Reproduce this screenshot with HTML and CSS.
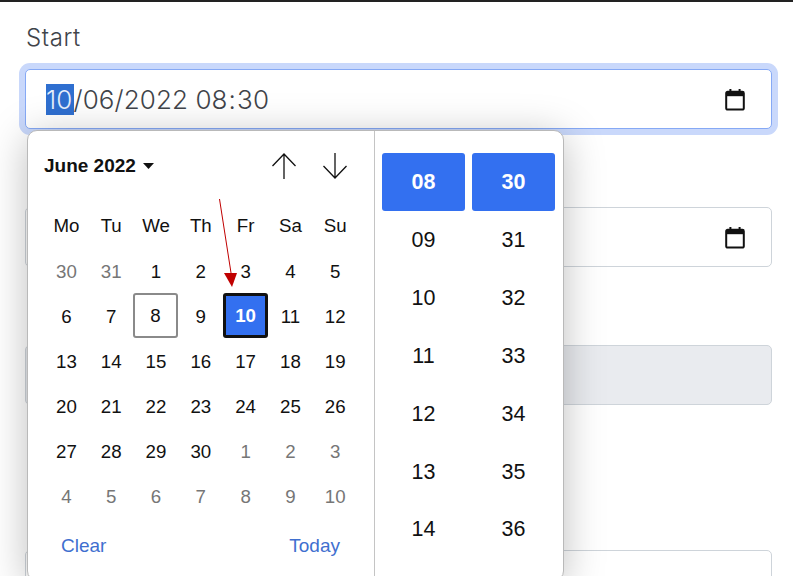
FILE: index.html
```html
<!DOCTYPE html>
<html lang="en">
<head>
<meta charset="utf-8">
<title>Date picker</title>
<link rel="stylesheet" href="styles.css">
</head>
<body>
<div class="page">
  <form class="form">
    <label class="label">Start</label>
    <div class="input input-focus">
      <span class="value"><span class="sel">10</span>/06/2022 08<span class="colon">:</span>30</span>
      <svg class="cal" viewBox="0 0 24 24" width="24" height="24"><path d="M3.2 6.2a1.4 1.4 0 0 1 1.4-1.4h14.8a1.4 1.4 0 0 1 1.4 1.4v15a1.4 1.4 0 0 1-1.4 1.4H4.6a1.4 1.4 0 0 1-1.4-1.4z" fill="none" stroke="#111" stroke-width="2"/><path d="M3.2 5h17.6v4.2H3.2z" fill="#111"/><path d="M7.4 2v3M16.6 2v3" stroke="#111" stroke-width="2"/></svg>
    </div>
    <div class="input second">
      <svg class="cal" viewBox="0 0 24 24" width="24" height="24"><path d="M3.2 6.2a1.4 1.4 0 0 1 1.4-1.4h14.8a1.4 1.4 0 0 1 1.4 1.4v15a1.4 1.4 0 0 1-1.4 1.4H4.6a1.4 1.4 0 0 1-1.4-1.4z" fill="none" stroke="#111" stroke-width="2"/><path d="M3.2 5h17.6v4.2H3.2z" fill="#111"/><path d="M7.4 2v3M16.6 2v3" stroke="#111" stroke-width="2"/></svg>
    </div>
    <div class="input third"></div>
    <div class="input fourth"></div>
  </form>

  <div class="popup">
    <div class="calendar">
      <div class="cal-head">
        <span class="month">June 2022</span>
        <svg class="caret" viewBox="0 0 11 6" width="11" height="6"><path d="M0 0h11L5.500 6z" fill="#111"/></svg>
        <span class="arrows">
          <svg viewBox="0 0 26 28" width="26" height="28"><path d="M13 2v25M1.500 14 13 2l11.500 12" fill="none" stroke="#111" stroke-width="1.300"/></svg>
          <svg viewBox="0 0 26 28" width="26" height="28"><path d="M13 1v25M1.500 14 13 26l11.500-12" fill="none" stroke="#111" stroke-width="1.300"/></svg>
        </span>
      </div>
      <div class="grid">
        <span class="dow">Mo</span><span class="dow">Tu</span><span class="dow">We</span><span class="dow">Th</span><span class="dow">Fr</span><span class="dow">Sa</span><span class="dow">Su</span>
        <span class="day out">30</span><span class="day out">31</span><span class="day">1</span><span class="day">2</span><span class="day">3</span><span class="day">4</span><span class="day">5</span>
        <span class="day">6</span><span class="day">7</span><span class="day today">8</span><span class="day">9</span><span class="day chosen">10</span><span class="day">11</span><span class="day">12</span>
        <span class="day">13</span><span class="day">14</span><span class="day">15</span><span class="day">16</span><span class="day">17</span><span class="day">18</span><span class="day">19</span>
        <span class="day">20</span><span class="day">21</span><span class="day">22</span><span class="day">23</span><span class="day">24</span><span class="day">25</span><span class="day">26</span>
        <span class="day">27</span><span class="day">28</span><span class="day">29</span><span class="day">30</span><span class="day out">1</span><span class="day out">2</span><span class="day out">3</span>
        <span class="day out">4</span><span class="day out">5</span><span class="day out">6</span><span class="day out">7</span><span class="day out">8</span><span class="day out">9</span><span class="day out">10</span>
      </div>
      <div class="cal-foot"><span>Clear</span><span>Today</span></div>
    </div>
    <div class="times">
      <div class="col">
        <span class="time on">08</span><span class="time">09</span><span class="time">10</span><span class="time">11</span><span class="time">12</span><span class="time">13</span><span class="time">14</span>
      </div>
      <div class="col">
        <span class="time on">30</span><span class="time">31</span><span class="time">32</span><span class="time">33</span><span class="time">34</span><span class="time">35</span><span class="time">36</span>
      </div>
    </div>
  </div>

  <svg class="annot" viewBox="0 0 22 90" width="22" height="90"><path d="M1.500 1 13.500 78" stroke="#c00000" stroke-width="1" fill="none"/><path d="M6 75h13L14 89z" fill="#c00000"/></svg>
</div>
</body>
</html>
```

FILE: styles.css
```css
* { box-sizing: border-box; }
html, body { margin: 0; padding: 0; background: #fff; }
.page {
  position: relative;
  width: 793px;
  height: 576px;
  overflow: hidden;
  border-top: 2px solid #222;
  font-family: "Liberation Sans", Arial, sans-serif;
  color: #111;
}
.form { display: flex; flex-direction: column; padding: 0 21px 0 25px; }
.label {
  margin: 21px 0 0 1px;
  height: 30px;
  line-height: 30px;
  font-family: "Inter", "Noto Sans", sans-serif;
  font-size: 24px;
  font-weight: 300;
  letter-spacing: 0.6px;
  color: #3f444a;
}
.input {
  display: flex;
  align-items: center;
  justify-content: flex-end;
  height: 60px;
  padding: 0 24px 0 20px;
  border: 1.500px solid #ced4da;
  border-radius: 5px;
  background: #fff;
}
.input-focus {
  margin-top: 16px;
  justify-content: space-between;
  border-color: #86a9f5;
  box-shadow: 0 0 0 6px #c9d8fb;
}
.second { margin-top: 78px; }
.third { margin-top: 78px; background: #e9ebef; }
.fourth { margin-top: 145px; }
.value {
  font-family: "Inter", "Noto Sans", sans-serif;
  font-size: 26px;
  font-weight: 300;
  letter-spacing: 0.1px;
  color: #3f444a;
}
.sel { background: #2f6fd0; color: #e6eefb; padding-right: 1px; }
.colon { padding: 0 1px; }
.cal { flex: none; }

.popup {
  position: absolute;
  left: 27px;
  top: 128px;
  width: 537px;
  height: 451px;
  display: flex;
  background: #fff;
  border: 1px solid #b9b9b9;
  border-radius: 10px;
  box-shadow: 0 6px 40px rgba(0, 0, 0, 0.26);
}
.calendar {
  width: 347px;
  flex: none;
  padding: 0 16px;
  border-right: 1px solid #c4c4c4;
}
.cal-head {
  display: flex;
  align-items: center;
  height: 73px;
  padding-bottom: 3px;
}
.month { font-size: 19px; font-weight: 700; margin-right: 7px; }
.caret { flex: none; }
.arrows { margin-left: auto; margin-right: 10px; display: flex; gap: 25px; }
.grid {
  display: grid;
  grid-template-columns: repeat(7, 44.800px);
  grid-auto-rows: 45px;
  font-size: 18.700px;
}
.dow, .day { display: flex; align-items: center; justify-content: center; }
.dow { height: 44px; }
.out { color: #767676; }
.today { border: 2px solid #8a8a8a; border-radius: 3px; margin: -1px 0 1px -1px; }
.chosen {
  background: #3370f0;
  border: 3px solid #111;
  border-radius: 3px;
  color: #fff;
  font-weight: 700;
  margin: -1px 0 1px;
}
.cal-foot {
  display: flex;
  justify-content: space-between;
  padding: 0 18px 0 17px;
  margin-top: 16px;
  font-size: 19px;
  color: #3f6fcf;
}
.times { display: flex; gap: 7px; padding: 22px 0 0 7px; }
.col { width: 83px; display: flex; flex-direction: column; }
.time {
  flex: none;
  height: 57.800px;
  display: flex;
  align-items: center;
  justify-content: center;
  font-size: 21.500px;
}
.on { height: 58px; margin-bottom: 1px; padding-top: 1px; background: #3370f0; color: #fff; font-weight: 700; border-radius: 3px; }
.annot { position: absolute; left: 218px; top: 196px; }
```
